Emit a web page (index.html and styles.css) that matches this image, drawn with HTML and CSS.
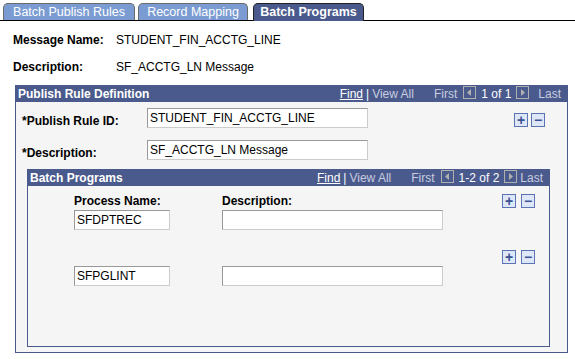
FILE: index.html
```html
<!DOCTYPE html>
<html lang="en">
<head>
    <meta charset="UTF-8">
    <title>Batch Programs</title>
    <link rel="stylesheet" href="styles.css">
</head>
<body>
    <div class="tabs">
        <div class="tab t1">Batch Publish Rules</div>
        <div class="tab t2">Record Mapping</div>
        <div class="tab t3 active">Batch Programs</div>
    </div>

    <div class="info">
        <div class="info-row"><span class="info-label">Message Name:</span><span>STUDENT_FIN_ACCTG_LINE</span></div>
        <div class="info-row"><span class="info-label">Description:</span><span>SF_ACCTG_LN Message</span></div>
    </div>

    <div class="box outer">
        <div class="box-head">
            <span class="box-title">Publish Rule Definition</span>
            <span class="nav">
                <a class="find">Find</a><span class="sep">|</span><span class="dim">View All</span>
                <span class="dim first">First</span>
                <span class="arrow"><svg width="9" height="9" viewBox="0 0 9 9"><path d="M6 1 L2 4.5 L6 8 Z" fill="#b0b0b0"/></svg></span>
                <span class="count">1 of 1</span>
                <span class="arrow"><svg width="9" height="9" viewBox="0 0 9 9"><path d="M3 1 L7 4.5 L3 8 Z" fill="#b0b0b0"/></svg></span>
                <span class="dim last">Last</span>
            </span>
        </div>
        <div class="rule-row">
            <label class="rule-label">*Publish Rule ID:</label>
            <div class="field wide">STUDENT_FIN_ACCTG_LINE</div>
            <div class="btns"><span class="btn">+</span><span class="btn">&minus;</span></div>
        </div>
        <div class="rule-row second">
            <label class="rule-label">*Description:</label>
            <div class="field wide">SF_ACCTG_LN Message</div>
        </div>

        <div class="box inner">
            <div class="box-head">
                <span class="box-title">Batch Programs</span>
                <span class="nav">
                    <a class="find">Find</a><span class="sep">|</span><span class="dim">View All</span>
                    <span class="dim first">First</span>
                    <span class="arrow"><svg width="9" height="9" viewBox="0 0 9 9"><path d="M6 1 L2 4.5 L6 8 Z" fill="#b0b0b0"/></svg></span>
                    <span class="count">1-2 of 2</span>
                    <span class="arrow"><svg width="9" height="9" viewBox="0 0 9 9"><path d="M3 1 L7 4.5 L3 8 Z" fill="#b0b0b0"/></svg></span>
                    <span class="dim">Last</span>
                </span>
            </div>
            <div class="prog-row">
                <div class="col name">
                    <div class="col-label">Process Name:</div>
                    <div class="field short">SFDPTREC</div>
                </div>
                <div class="col desc">
                    <div class="col-label">Description:</div>
                    <div class="field wide"></div>
                </div>
                <div class="btns"><span class="btn">+</span><span class="btn">&minus;</span></div>
            </div>
            <div class="prog-row">
                <div class="col name">
                    <div class="field short">SFPGLINT</div>
                </div>
                <div class="col desc">
                    <div class="field wide"></div>
                </div>
                <div class="btns"><span class="btn">+</span><span class="btn">&minus;</span></div>
            </div>
        </div>
    </div>
</body>
</html>
```

FILE: styles.css
```css
body {
    margin: 0;
    font-family: "Liberation Sans", Arial, sans-serif;
    font-size: 12px;
    color: #000;
    background: #fff;
}
.tabs {
    display: flex;
    gap: 3px;
    padding: 3px 0 0 3px;
    border-bottom: 1px solid #000;
    height: 17px;
}
.tab {
    height: 17px;
    line-height: 17px;
    background: #7b9cd2;
    color: #fff;
    border: 1px solid #6b6b6b;
    border-bottom: none;
    border-radius: 5px 5px 0 0;
    box-sizing: border-box;
    font-size: 12.5px;
    text-align: center;
}
.t1 {
    width: 132px;
}
.t2 {
    width: 110px;
}
.t3 {
    width: 111px;
    margin-left: 2px;
}
.tab.active {
    background: #4a5a8c;
    border-color: #222;
    font-weight: bold;
    height: 18px;
}
.info {
    padding: 11px 0 0 13px;
}
.info-row {
    display: flex;
    height: 27px;
    line-height: 16px;
}
.info-row + .info-row {
    height: 26px;
}
.info-label {
    width: 103px;
    font-weight: bold;
}
.box {
    background: #f5f5f5;
    border: 1px solid #4a5a8c;
}
.outer {
    margin: 0 7px 0 15px;
    height: 268px;
    box-sizing: border-box;
}
.box-head {
    display: flex;
    justify-content: space-between;
    align-items: center;
    background: #4a5a8c;
    color: #fff;
    height: 16px;
    padding: 0 6px 0 2px;
}
.box-title {
    font-weight: bold;
}
.nav {
    display: flex;
    align-items: center;
    gap: 3px;
    color: #fff;
}
.find {
    text-decoration: underline;
}
.dim {
    color: #c8cde0;
}
.first {
    margin-left: 17px;
    margin-right: 3px;
}
.count {
    margin: 0 2px;
}
.last {
    margin-left: 6px;
}
.arrow {
    display: inline-flex;
    width: 13px;
    height: 13px;
    box-sizing: border-box;
    border: 1px solid #b0b0b0;
    align-items: center;
    justify-content: center;
    margin-top: -3px;
}
.rule-row {
    display: flex;
    align-items: center;
    padding: 6px 0 0 6px;
    height: 20px;
}
.rule-row.second {
    padding-top: 12px;
}
.rule-label {
    width: 125px;
    font-weight: bold;
    margin-top: 6px;
}
.field {
    background: #fff;
    border: 1px solid #ccc;
    border-top-color: #999;
    border-left-color: #999;
    height: 20px;
    line-height: 18px;
    padding: 0 2px;
    box-sizing: border-box;
}
.field.wide {
    width: 221px;
}
.field.short {
    width: 96px;
}
.rule-row .btns {
    margin-left: auto;
    margin-right: 22px;
    margin-top: 4px;
}
.btns {
    display: flex;
    gap: 3px;
}
.prog-row .btns {
    gap: 5px;
}
.btn {
    width: 14px;
    height: 14px;
    box-sizing: border-box;
    border: 1px solid #5b73b3;
    background: #dde7f8;
    color: #3e5394;
    font-weight: bold;
    font-size: 14px;
    line-height: 12px;
    text-align: center;
}
.inner {
    margin: 9px 17px 0 11px;
    height: 178px;
    box-sizing: border-box;
}
.prog-row {
    display: flex;
    align-items: flex-start;
    padding-left: 46px;
    height: 56px;
    margin-top: 8px;
}
.prog-row + .prog-row {
    height: 40px;
    margin-top: 0;
}
.col-label {
    font-weight: bold;
    margin-bottom: 2px;
    height: 14px;
}
.col.name {
    width: 148px;
}
.col.desc {
    width: 280px;
}
.prog-row + .prog-row .col {
    padding-top: 16px;
}
.prog-row .btns {
    margin-left: auto;
    margin-right: 14px;
}
```
